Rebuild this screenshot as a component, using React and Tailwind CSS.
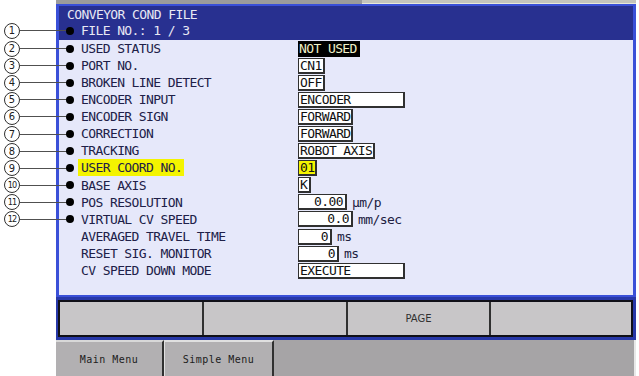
import React from "react";

const rows = [
  { label: "USED STATUS", value: "NOT USED", kind: "dark", w: "w-[62px]" },
  { label: "PORT NO.", value: "CN1", w: "w-[27px]" },
  { label: "BROKEN LINE DETECT", value: "OFF", w: "w-[27px]" },
  { label: "ENCODER INPUT", value: "ENCODER", w: "w-[107px]" },
  { label: "ENCODER SIGN", value: "FORWARD", w: "w-[55px]" },
  { label: "CORRECTION", value: "FORWARD", w: "w-[55px]" },
  { label: "TRACKING", value: "ROBOT AXIS", w: "w-[77px]" },
  { label: "USER COORD NO.", value: "01", kind: "yellow", w: "w-[19px]" },
  { label: "BASE AXIS", value: "K", w: "w-[13px]" },
  { label: "POS RESOLUTION", value: "0.00", num: true, unit: "µm/p", w: "w-[49px]" },
  { label: "VIRTUAL CV SPEED", value: "0.0", num: true, unit: "mm/sec", w: "w-[55px]" },
  { label: "AVERAGED TRAVEL TIME", value: "0", num: true, unit: "ms", w: "w-[34px]" },
  { label: "RESET SIG. MONITOR", value: "0", num: true, unit: "ms", w: "w-[41px]" },
  { label: "CV SPEED DOWN MODE", value: "EXECUTE", w: "w-[107px]" },
];

const callouts = ["1", "2", "3", "4", "5", "6", "7", "8", "9", "10", "11", "12"];

const mono = "font-['DejaVu_Sans_Mono',monospace] text-[13px] tracking-[-0.6px]";

function Value({ row }) {
  if (row.kind === "dark") {
    return (
      <div className={`${row.w} h-[16px] bg-black text-[#f0f0c8] leading-[16px] pl-[1px]`}>
        {row.value}
      </div>
    );
  }
  const bg = row.kind === "yellow" ? "bg-[#f4f400]" : "bg-white";
  return (
    <div className="flex items-center">
      <div
        className={`${row.w} ${bg} h-[16px] border border-[#303030] border-r-2 border-b-2 leading-[13px] text-[#101010] ${
          row.num ? "text-right pr-[2px]" : "pl-[1px]"
        }`}
      >
        {row.value}
      </div>
      {row.unit && <span className="ml-[5px] text-[#202040]">{row.unit}</span>}
    </div>
  );
}

export default function App() {
  return (
    <div className={`w-[639px] h-[376px] bg-white relative flex overflow-hidden ${mono}`}>
      <div className="w-[56px] shrink-0" />
      <div className="w-[580px] flex flex-col">
        {/* top tab strip */}
        <div className="h-[4px] flex">
          <div className="w-[306px] bg-[#9c9c9c]" />
          <div className="flex-1 bg-[#c4c4bc] border-b border-[#e8e8d8]" />
        </div>

        {/* header */}
        <div className="h-[36px] bg-[#283090] border-t-2 border-x-[3px] border-[#3a50d8] text-[#e8e8f4] pl-[8px] leading-[16px] pt-[1px]">
          <div>CONVEYOR COND FILE</div>
          <div className="pl-[14px]">FILE NO.: 1 / 3</div>
        </div>

        {/* content */}
        <div className="h-[257px] bg-[#e6e8fa] border-x-[3px] border-b-2 border-[#3a50d8] flex flex-col text-[#202048]">
          {rows.map((row) => (
            <div key={row.label} className="h-[17.1px] flex items-center shrink-0">
              <div className="w-[239px] shrink-0 pl-[22px]">
                <span
                  className={
                    row.kind === "yellow" ? "bg-[#f4f400] -ml-[3px] pl-[3px] pr-[2px] py-[1px]" : ""
                  }
                >
                  {row.label}
                </span>
              </div>
              <Value row={row} />
            </div>
          ))}
        </div>

        {/* function keys */}
        <div className="h-[43px] bg-[#2838a8] pt-[3px] pb-[3px] pl-[2px] pr-[3px] flex">
          <div className="flex-1 flex border-2 border-[#101018] bg-[#c8c6c8] font-['DejaVu_Sans',sans-serif] text-[10px] tracking-normal text-[#303030]">
            <div className="w-[144px] border-r-2 border-[#303030]" />
            <div className="w-[144px] border-r-2 border-[#303030]" />
            <div className="w-[143px] border-r-2 border-[#303030] flex items-center justify-center">
              PAGE
            </div>
            <div className="flex-1" />
          </div>
        </div>

        {/* bottom menu */}
        <div className="flex-1 flex bg-[#a6a4a6] text-[10px] tracking-[0.5px] text-[#202020] font-['DejaVu_Sans_Mono',monospace]">
          <div className="w-[108px] border-t-2 border-[#d8d8d8] border-r-2 border-r-[#303030] bg-[#b2b0b2] flex items-center justify-center">
            Main Menu
          </div>
          <div className="w-[110px] border-t-2 border-l border-[#e0e0e0] border-r-2 border-r-[#303030] bg-[#b2b0b2] flex items-center justify-center">
            Simple Menu
          </div>
          <div className="flex-1 border-r-2 border-[#e8e8e8]" />
        </div>
      </div>
      <div className="w-[3px] bg-white" />

      {/* callouts */}
      <div className="absolute left-0 top-[21px] flex flex-col">
        {callouts.map((c, i) => (
          <div
            key={c}
            className={`${i === 0 ? "h-[19px]" : "h-[17.1px]"} flex items-center shrink-0 pl-[4px]`}
          >
            <div
              className={`w-[16px] h-[16px] rounded-full border border-[#303030] flex items-center justify-center font-['DejaVu_Sans_Condensed','DejaVu_Sans',sans-serif] text-[#202020] leading-none ${
                c.length > 1 ? "text-[9px] tracking-[-1px]" : "text-[11px] tracking-normal"
              }`}
            >
              {c}
            </div>
            <div className="w-[48px] h-px bg-[#505050]" />
            <div className="w-[8px] h-[8px] rounded-full bg-black -ml-[2px]" />
          </div>
        ))}
      </div>
    </div>
  );
}
